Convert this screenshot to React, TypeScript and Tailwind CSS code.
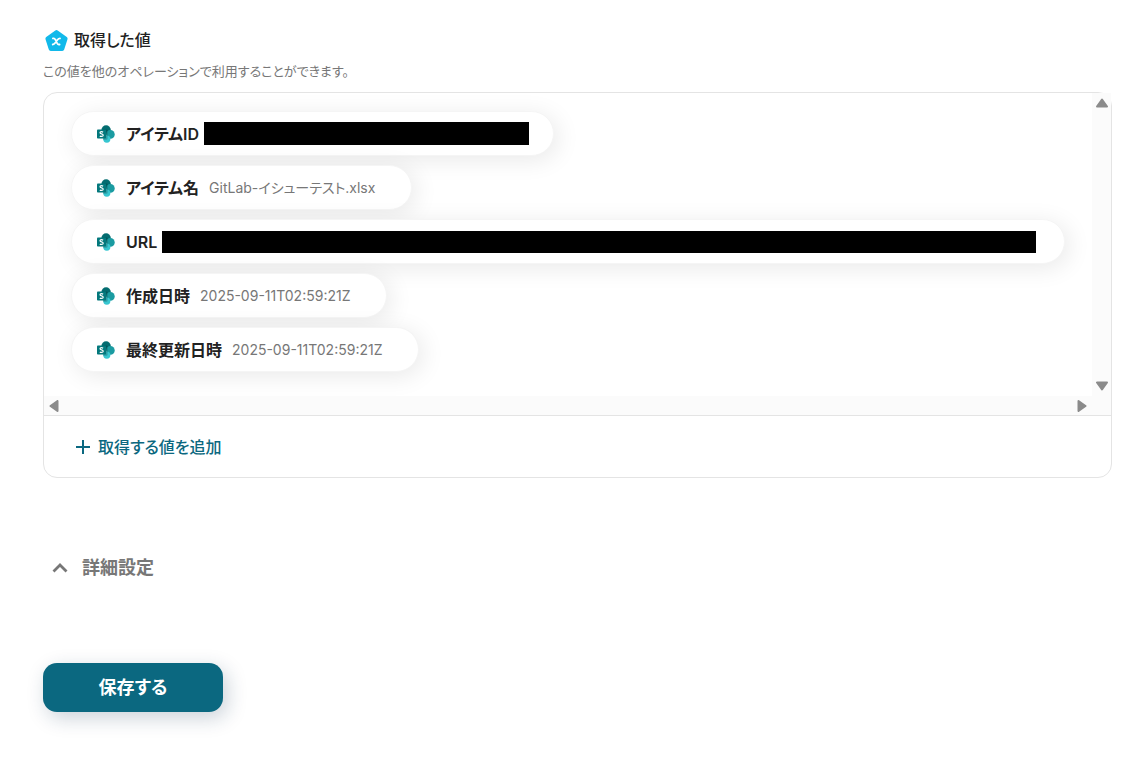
type OutputValue = {
  label: string;
  value?: string;
  maskClassName?: string;
};

const outputValues: OutputValue[] = [
  { label: 'アイテムID', maskClassName: 'mr-6 h-[23px] w-[325px]' },
  { label: 'アイテム名', value: 'GitLab-イシューテスト.xlsx' },
  { label: 'URL', maskClassName: 'mr-7 h-[22px] w-[874px]' },
  { label: '作成日時', value: '2025-09-11T02:59:21Z' },
  { label: '最終更新日時', value: '2025-09-11T02:59:21Z' },
];

const VariableIcon = () => (
  <svg className="h-6 w-6 shrink-0" viewBox="0 0 24 24" fill="none" aria-hidden>
    <path
      d="M12.5 4 21.6 10.6 18.3 21H6.7L3.4 10.6Z"
      fill="#12b9ea"
      stroke="#12b9ea"
      strokeWidth="4"
      strokeLinejoin="round"
    />
    <path
      d="M8.9 10.4h.8c.8 0 1.2.4 1.6 1.2l1.9 3.8c.4.7.8 1.1 1.6 1.1h.8M16 10.400c-1.200 0-1.800.5-2.500 1.400l-2.200 3c-.7 1-1.300 1.700-2.600 1.700"
      stroke="#fff"
      strokeWidth="1.8"
      strokeLinecap="round"
    />
  </svg>
);

const SharePointIcon = () => (
  <svg className="h-[18px] w-[18px] shrink-0" viewBox="0 0 18 18" aria-hidden>
    <circle cx="9.1" cy="5" r="4.7" fill="#036c70" />
    <circle cx="13.4" cy="9.4" r="4.3" fill="#1a9ba1" />
    <circle cx="9.8" cy="14.1" r="3.6" fill="#37c6d0" />
    <path d="M5 4.4h4.7c.5 0 .9.4.9.9v8.5c0 .5-.4.9-.9.9H6V4.4z" fill="#000" opacity="0.2" />
    <rect y="4.5" width="9" height="9" rx="0.8" fill="#03787c" />
    <path
      d="M6.1 7.2c-.4-.3-1-.5-1.6-.5-.9 0-1.5.4-1.5 1.1 0 1.5 3.2.8 3.2 2.4 0 .7-.7 1.2-1.7 1.2-.7 0-1.3-.2-1.7-.5"
      fill="none"
      stroke="#fff"
      strokeWidth="1.2"
    />
  </svg>
);

const ValuePill = ({ label, value, maskClassName }: OutputValue) => (
  <li className="flex h-[45px] w-fit items-center rounded-full border border-[#f5f5f5] bg-white pl-[25px] shadow-[4px_4px_24px_rgba(0,0,0,0.09)]">
    <SharePointIcon />
    <span className="ml-[11px] shrink-0 text-base font-semibold text-[#222]">{label}</span>
    {value ? <span className="mr-9 ml-[10px] text-sm text-[#777]">{value}</span> : null}
    {maskClassName ? <span className={`ml-[5px] bg-black ${maskClassName}`} /> : null}
  </li>
);

type ScrollButtonProps = {
  label: string;
  className?: string;
};

const ScrollButton = ({ label, className = '' }: ScrollButtonProps) => (
  <button type="button" aria-label={label} className="flex h-5 w-5 items-center justify-center">
    <svg className={`h-3 w-3 ${className}`} viewBox="0 0 12 12" aria-hidden>
      <path d="M6 2.5 11 9.5H1Z" fill="#8b8b8b" stroke="#8b8b8b" strokeWidth="2" strokeLinejoin="round" />
    </svg>
  </button>
);

const OutputPanel = () => (
  <div className="mt-3 rounded-[14px] border border-[#e4e4e4]">
    <div className="grid grid-cols-[minmax(0,1fr)_19px] border-b border-[#e4e4e4]">
      <ul className="flex flex-col gap-[9px] overflow-hidden rounded-tl-[14px] pt-[18px] pb-6 pl-[27px]">
        {outputValues.map((item) => (
          <ValuePill key={item.label} {...item} />
        ))}
      </ul>
      <div className="flex flex-col items-center justify-between bg-[#fbfbfb]">
        <ScrollButton label="上へスクロール" />
        <ScrollButton label="下へスクロール" className="rotate-180" />
      </div>
      <div className="flex h-[19px] items-center justify-between bg-[#fbfbfb]">
        <ScrollButton label="左へスクロール" className="-rotate-90" />
        <ScrollButton label="右へスクロール" className="rotate-90" />
      </div>
      <div className="bg-[#fbfbfb]" />
    </div>
    <button type="button" className="flex h-[61px] items-center gap-2 px-8 text-base font-medium text-[#0b6880]">
      <svg className="h-[14px] w-[14px]" viewBox="0 0 14 14" fill="none" aria-hidden>
        <path d="M7 0v14M0 7h14" stroke="currentColor" strokeWidth="2" />
      </svg>
      取得する値を追加
    </button>
  </div>
);

const App = () => (
  <main className="min-h-screen bg-white pt-7 pr-[35px] pb-14 pl-[43px] font-['Inter','Noto_Sans_CJK_JP',sans-serif] [font-feature-settings:'palt']">
    <section>
      <h2 className="flex items-center gap-1.5 pl-px text-base font-medium text-[#222]">
        <VariableIcon />
        取得した値
      </h2>
      <p className="mt-[10px] text-[13px] leading-[18px] text-[#777]">
        この値を他のオペレーションで利用することができます。
      </p>
      <OutputPanel />
    </section>

    <button type="button" className="mt-[76px] flex h-7 items-center gap-[14px] pl-[9px] text-lg font-bold text-[#777]">
      <svg className="h-4 w-4" viewBox="0 0 16 16" fill="none" aria-hidden>
        <path d="M1.5 11.5 8 5l6.5 6.5" stroke="currentColor" strokeWidth="2.8" />
      </svg>
      詳細設定
    </button>

    <button
      type="submit"
      className="mt-[81px] block h-[49px] w-[180px] rounded-[14px] bg-[#0b6880] text-lg font-bold text-white shadow-[4px_6px_20px_rgba(20,50,80,0.22)]"
    >
      保存する
    </button>
  </main>
);

export default App;
